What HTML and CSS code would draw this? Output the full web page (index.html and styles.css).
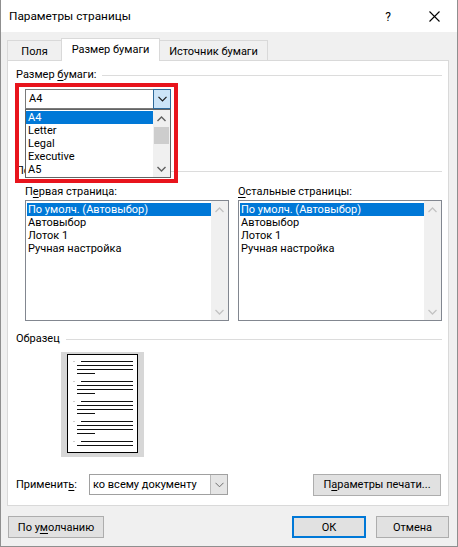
FILE: index.html
```html
<!DOCTYPE html>
<html lang="ru">
<head>
<meta charset="utf-8">
<title>Параметры страницы</title>
<link rel="stylesheet" href="styles.css">
</head>
<body>
<div class="window">
  <div class="titlebar">
    <span class="title">Параметры страницы</span>
    <span class="cap-btn help">?</span>
    <span class="cap-btn close">
      <svg width="11" height="11" viewBox="0 0 11 11"><path d="M0.5 0.5 L10.5 10.5 M10.5 0.5 L0.5 10.5" stroke="#000" stroke-width="1.1" fill="none"/></svg>
    </span>
  </div>
  <div class="body">
    <div class="tabs">
      <div class="tab tab-fields">Поля</div>
      <div class="tab tab-size active">Размер бумаги</div>
      <div class="tab tab-source">Источник бумаги</div>
    </div>
    <div class="panel">
      <div class="group-head head-size"><span>Размер <u>б</u>умаги:</span><i class="rule"></i></div>
      <div class="combo-wrap">
        <div class="combo combo-open">
          <span class="combo-text">A4</span>
          <span class="combo-btn">
            <svg width="9" height="6" viewBox="0 0 9 6"><path d="M0.5 0.8 L4.5 4.8 L8.5 0.8" stroke="#1a1a1a" stroke-width="1.2" fill="none"/></svg>
          </span>
        </div>
        <div class="dropdown">
          <div class="dd-items">
            <div class="item sel">A4</div>
            <div class="item">Letter</div>
            <div class="item">Legal</div>
            <div class="item">Executive</div>
            <div class="item">A5</div>
          </div>
          <div class="scrollbar dd-scroll">
            <span class="arrow">
              <svg width="9" height="6" viewBox="0 0 9 6"><path d="M0.5 5 L4.5 1 L8.5 5" stroke="#606060" stroke-width="1.4" fill="none"/></svg>
            </span>
            <span class="thumb"></span>
            <span class="track"></span>
            <span class="arrow">
              <svg width="9" height="6" viewBox="0 0 9 6"><path d="M0.5 1 L4.5 5 L8.5 1" stroke="#606060" stroke-width="1.4" fill="none"/></svg>
            </span>
          </div>
        </div>
        <div class="callout"></div>
      </div>

      <div class="group-head head-feed"><span>Подача бумаги</span><i class="rule"></i></div>
      <div class="lists">
        <div class="col">
          <div class="col-label">П<u>е</u>рвая страница:</div>
          <div class="listbox">
            <div class="lb-items">
              <div class="row sel">По умолч. (Автовыбор)</div>
              <div class="row">Автовыбор</div>
              <div class="row">Лоток 1</div>
              <div class="row">Ручная настройка</div>
            </div>
            <div class="scrollbar lb-scroll">
              <span class="arrow">
                <svg width="9" height="6" viewBox="0 0 9 6"><path d="M0.5 5 L4.5 1 L8.5 5" stroke="#c3c3c3" stroke-width="1.3" fill="none"/></svg>
              </span>
              <span class="track"></span>
              <span class="arrow">
                <svg width="9" height="6" viewBox="0 0 9 6"><path d="M0.5 1 L4.5 5 L8.5 1" stroke="#c3c3c3" stroke-width="1.3" fill="none"/></svg>
              </span>
            </div>
          </div>
        </div>
        <div class="col">
          <div class="col-label"><u>О</u>стальные страницы:</div>
          <div class="listbox">
            <div class="lb-items">
              <div class="row sel">По умолч. (Автовыбор)</div>
              <div class="row">Автовыбор</div>
              <div class="row">Лоток 1</div>
              <div class="row">Ручная настройка</div>
            </div>
            <div class="scrollbar lb-scroll">
              <span class="arrow">
                <svg width="9" height="6" viewBox="0 0 9 6"><path d="M0.5 5 L4.5 1 L8.5 5" stroke="#c3c3c3" stroke-width="1.3" fill="none"/></svg>
              </span>
              <span class="track"></span>
              <span class="arrow">
                <svg width="9" height="6" viewBox="0 0 9 6"><path d="M0.5 1 L4.5 5 L8.5 1" stroke="#c3c3c3" stroke-width="1.3" fill="none"/></svg>
              </span>
            </div>
          </div>
        </div>
      </div>

      <div class="group-head head-sample"><span>Образец</span><i class="rule"></i></div>
      <div class="preview">
        <svg width="83" height="105" viewBox="0 0 83 105">
          <rect x="0" y="0" width="83" height="105" fill="#d7d7d7"/>
          <rect x="6.5" y="2.5" width="70" height="98" fill="#fff" stroke="#000" stroke-width="1"/>
          <g fill="#111">
            <rect x="20" y="9" width="52" height="1"/>
            <rect x="16" y="13" width="56" height="1"/>
            <rect x="16" y="17" width="56" height="1"/>
            <rect x="16" y="21" width="18" height="1"/>
            <rect x="20" y="29" width="52" height="1"/>
            <rect x="16" y="33" width="56" height="1"/>
            <rect x="16" y="37" width="56" height="1"/>
            <rect x="16" y="41" width="18" height="1"/>
            <rect x="20" y="49" width="52" height="1"/>
            <rect x="16" y="53" width="56" height="1"/>
            <rect x="16" y="57" width="56" height="1"/>
            <rect x="16" y="61" width="18" height="1"/>
            <rect x="20" y="69" width="52" height="1"/>
            <rect x="16" y="73" width="56" height="1"/>
            <rect x="16" y="77" width="56" height="1"/>
            <rect x="16" y="81" width="18" height="1"/>
            <rect x="20" y="89" width="52" height="1"/>
            <rect x="16" y="93" width="56" height="1"/>
          </g>
          <g fill="#cfcfcf">
            <rect x="12" y="9" width="2" height="1"/>
            <rect x="12" y="29" width="2" height="1"/>
            <rect x="12" y="49" width="2" height="1"/>
            <rect x="12" y="69" width="2" height="1"/>
            <rect x="12" y="89" width="2" height="1"/>
          </g>
        </svg>
      </div>

      <div class="apply-row">
        <span class="apply-label">Применит<u>ь</u>:</span>
        <div class="combo combo-apply">
          <span class="combo-text">ко всему документу</span>
          <span class="combo-btn">
            <svg width="9" height="6" viewBox="0 0 9 6"><path d="M0.5 0.8 L4.5 4.8 L8.5 0.8" stroke="#6d6d6d" stroke-width="1" fill="none"/></svg>
          </span>
        </div>
        <button class="btn btn-print">П<u>а</u>раметры печати...</button>
      </div>
    </div>

    <div class="footer">
      <button class="btn btn-default">По у<u>м</u>олчанию</button>
      <span class="spacer"></span>
      <button class="btn btn-ok">ОК</button>
      <button class="btn btn-cancel">Отмена</button>
    </div>
  </div>
</div>
</body>
</html>
```

FILE: styles.css
```css
* { box-sizing: border-box; }

html, body {
  margin: 0;
  padding: 0;
  background: #fff;
}

body {
  font-family: Roboto, "Liberation Sans", Arial, sans-serif;
  font-size: 11px;
  color: #000;
}

u { text-decoration: underline; text-underline-offset: 2px; }

.window {
  width: 458px;
  height: 547px;
  border-left: 1px solid #8f8f8f;
  border-right: 1px solid #8f8f8f;
  border-bottom: 1px solid #8f8f8f;
  background: #f0f0f0;
  display: flex;
  flex-direction: column;
}

/* title bar */
.titlebar {
  height: 32px;
  flex: none;
  background: #fff;
  display: flex;
  align-items: center;
  padding-left: 8px;
}
.title { flex: 1; font-size: 11.8px; }
.cap-btn {
  width: 46px;
  height: 32px;
  display: flex;
  align-items: center;
  justify-content: center;
}
.help { font-size: 12px; padding-top: 1px; }

/* body */
.body {
  flex: 1;
  display: flex;
  flex-direction: column;
  padding: 6px 8px 0 6px;
}

.tabs {
  display: flex;
  align-items: flex-end;
  height: 22px;
  position: relative;
  z-index: 1;
}
.tab {
  height: 20px;
  border: 1px solid #d9d9d9;
  border-bottom: none;
  background: #f0f0f0;
  text-align: center;
  line-height: 20px;
  padding-top: 1px;
  white-space: nowrap;
}
.tab-fields { width: 54px; border-right: none; }
.tab-size { width: 99px; }
.tab-source { width: 108px; border-left: none; }
.tab.active {
  height: 23px;
  background: #fff;
  margin-bottom: -1px;
  line-height: 22px;
  padding-top: 0;
}

.panel {
  height: 446px;
  flex: none;
  background: #fff;
  border: 1px solid #d9d9d9;
  padding: 0 6px 0 8px;
  display: flex;
  flex-direction: column;
}

.group-head {
  display: flex;
  align-items: center;
  height: 14px;
  line-height: 14px;
  white-space: nowrap;
}
.group-head .rule {
  flex: 1;
  height: 1px;
  background: #dcdcdc;
  margin-left: 6px;
}
.head-size { margin-top: 7px; }
.head-feed { margin-top: 55px; }
.head-sample { margin-top: 11px; }

/* paper size combo with open dropdown */
.combo-wrap {
  position: relative;
  margin-top: 7px;
  margin-left: 9px;
  width: 146px;
  height: 20px;
  z-index: 2;
}
.combo {
  display: flex;
  height: 100%;
  background: #fff;
  border: 1px solid #7a7a7a;
}
.combo-text {
  flex: 1;
  padding-left: 3px;
  line-height: 18px;
  white-space: nowrap;
}
.combo-btn {
  width: 17px;
  display: flex;
  align-items: center;
  justify-content: center;
}
.combo-open .combo-btn {
  background: #cce4f7;
  border: 1px solid #2f6a9a;
  margin: -1px -1px -1px 0;
  width: 18px;
}

.dropdown {
  position: absolute;
  left: 0;
  top: 20px;
  width: 146px;
  height: 69px;
  background: #fff;
  border: 1px solid #646464;
  display: flex;
}
.dd-items { flex: 1; padding-top: 1px; }
.item {
  height: 13px;
  line-height: 13px;
  padding-left: 2px;
  white-space: nowrap;
}
.item.sel, .row.sel {
  background: #0078d7;
  color: #fff;
}

.scrollbar {
  width: 17px;
  flex: none;
  background: #f0f0f0;
  display: flex;
  flex-direction: column;
}
.scrollbar .arrow {
  height: 17px;
  flex: none;
  display: flex;
  align-items: center;
  justify-content: center;
}
.scrollbar .track { flex: 1; }
.dd-scroll .thumb {
  height: 17px;
  flex: none;
  margin: 0 1px;
  background: #cdcdcd;
}

.callout {
  position: absolute;
  left: -10px;
  top: -6px;
  width: 163px;
  height: 100px;
  border: 4px solid #e8141c;
  pointer-events: none;
}

/* paper feed lists */
.lists {
  display: flex;
  gap: 9px;
  margin-top: 7px;
  padding-left: 9px;
}
.col { width: 204px; }
.col-label {
  height: 14px;
  line-height: 14px;
  white-space: nowrap;
}
.listbox {
  margin-top: 1px;
  height: 121px;
  border: 1px solid #828790;
  display: flex;
}
.lb-items {
  flex: 1;
  padding: 2px 0 0 1px;
}
.row {
  height: 13px;
  line-height: 13px;
  padding-left: 1px;
  white-space: nowrap;
}

/* sample */
.preview {
  margin-top: 6px;
  margin-left: 45px;
  width: 83px;
  height: 105px;
}
.preview svg { display: block; }

/* apply row */
.apply-row {
  display: flex;
  align-items: center;
  margin-top: 17px;
  height: 21px;
}
.apply-label { width: 73px; white-space: nowrap; }
.combo-apply {
  width: 139px;
  height: 21px;
  border: 1px solid #a0a0a0;
}
.combo-apply .combo-text { line-height: 19px; }
.combo-apply .combo-btn {
  background: #e5e5e5;
  border-left: 1px solid #b9b9b9;
}

.btn {
  font-family: inherit;
  font-size: 11px;
  color: #000;
  background: #e1e1e1;
  border: 1px solid #adadad;
  padding: 0;
  height: 22px;
  white-space: nowrap;
}
.btn-print {
  margin-left: auto;
  margin-right: 1px;
  width: 128px;
}

/* footer */
.footer {
  display: flex;
  margin-top: 10px;
}
.spacer { flex: 1; }
.btn-default { width: 96px; margin-left: 1px; }
.btn-ok {
  width: 74px;
  border: 2px solid #0078d7;
  margin-right: 10px;
}
.btn-cancel { width: 73px; }
```
